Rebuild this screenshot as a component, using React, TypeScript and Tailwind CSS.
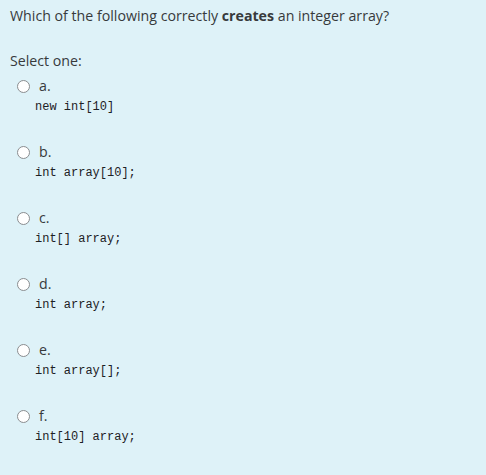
import React from "react";

const options = [
  { letter: "a.", code: "new int[10]" },
  { letter: "b.", code: "int array[10];" },
  { letter: "c.", code: "int[] array;" },
  { letter: "d.", code: "int array;" },
  { letter: "e.", code: "int array[];" },
  { letter: "f.", code: "int[10] array;" },
];

const App = () => {
  return (
    <div className="min-h-screen bg-[#def2f8] px-[10px] pt-[5px] font-['Segoe_UI','Open_Sans',sans-serif] text-[14.2px] text-[#373a3c]">
      <p className="leading-[22px]">
        Which of the following correctly <strong className="font-bold">creates</strong> an integer array?
      </p>
      <div className="mt-[23px] leading-[22px]">Select one:</div>
      <div className="mt-[3px]">
        {options.map((o) => (
          <div key={o.letter} className="mb-[24px]">
            <label className="flex items-center h-[22px]">
              <span className="ml-[7px] w-[13px] h-[13px] rounded-full border border-[#8a8d90] bg-white" />
              <span className="ml-[9px] leading-[22px]">{o.letter}</span>
            </label>
            <div className="pl-[25px] leading-[20px] text-[12px] text-[#1d2125] font-['Liberation_Mono','DejaVu_Sans_Mono',monospace] whitespace-pre">
              {o.code}
            </div>
          </div>
        ))}
      </div>
    </div>
  );
};

export default App;
